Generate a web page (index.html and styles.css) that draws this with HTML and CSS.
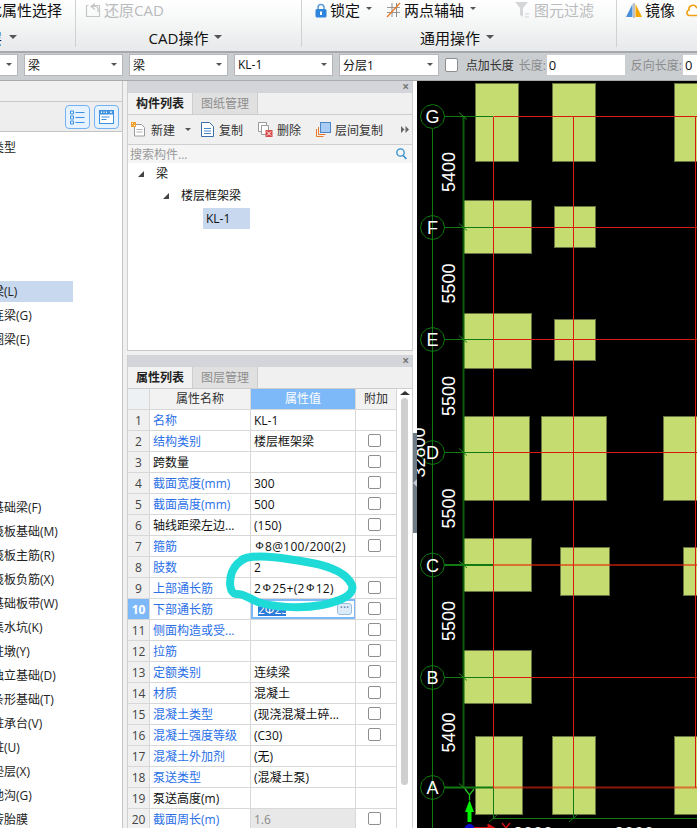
FILE: index.html
```html
<!DOCTYPE html>
<html lang="zh-CN">
<head>
<meta charset="utf-8">
<title>构件属性</title>
<link rel="stylesheet" href="styles.css">
</head>
<body>
<div class="page">
  <header class="ribbon">
    <section class="group g1">
      <div class="row1"><span class="clip-a">批属性选择</span></div>
      <div class="row2 start"><span class="clip-b">层</span><i class="caret big"></i></div>
    </section>
    <section class="group g2">
      <div class="row1">
        <span class="tool off">
          <svg class="ico" width="16" height="16" viewBox="0 0 16 16"><path d="M1.5 3.5h2M1.5 3.5v11h13v-11h-8M10 1.5l-4 3 4 3M6 4.5h5a2.5 2.5 0 0 1 2 2.5v3" fill="none" stroke="#c4c6c8" stroke-width="1.2"/></svg>还原CAD
        </span>
      </div>
      <div class="row2"><span>CAD操作</span><i class="caret big"></i></div>
    </section>
    <section class="group g3">
      <div class="row1">
        <span class="tool t-lock">
          <svg class="ico" width="12" height="15" viewBox="0 0 12 15"><path d="M3 7V4.5a3 3 0 0 1 6 0V7" fill="none" stroke="#5b9bd8" stroke-width="1.5"/><rect x="0.5" y="6" width="11" height="8.5" rx="1.5" fill="#2f84dc"/><rect x="5" y="8.5" width="2" height="3.5" fill="#fff"/></svg>锁定<i class="caret"></i>
        </span>
        <span class="tool t-axis">
          <svg class="ico" width="15" height="16" viewBox="0 0 15 16"><path d="M1 5.5h13M1 10.5h13" stroke="#9a9a9a" fill="none"/><path d="M6 1v14M10.5 1v14" stroke="#8a8a8a" fill="none"/><path d="M1 15L14 1" stroke="#e8792a" stroke-width="1.3" fill="none"/></svg>两点辅轴<i class="caret"></i>
        </span>
        <span class="tool off t-filter">
          <svg class="ico" width="16" height="16" viewBox="0 0 16 16"><path d="M0 0h13L8 6v9L5 13V6z" fill="#d4d6d8"/><path d="M10 12h4M10 15h4" stroke="#d0d2d4"/></svg>图元过滤
        </span>
      </div>
      <div class="row2"><span>通用操作</span><i class="caret big"></i></div>
    </section>
    <section class="group g4">
      <div class="row1">
        <span class="tool">
          <svg class="ico" width="16" height="15" viewBox="0 0 16 15"><path d="M6.5 1v13H0z" fill="#4a90d9"/><path d="M9.500 1v13H16z" fill="#f5a800"/><path d="M8 0v15" stroke="#888"/></svg>镜像
        </span>
        <svg class="cloud" width="16" height="14" viewBox="0 0 16 14"><path d="M3.500 12.500a2.800 2.800 0 0 1-.5-5.500 4 4 0 0 1 7.500-2.500 3.500 3.500 0 0 1 4 8z" fill="#fff" stroke="#f0a010" stroke-width="1.6"/></svg>
      </div>
    </section>
  </header>

  <div class="toolbar">
    <div class="combo c0"><i class="caret"></i></div>
    <div class="combo c1"><span>梁</span><i class="caret"></i></div>
    <div class="combo c2"><span>梁</span><i class="caret"></i></div>
    <div class="combo c2"><span>KL-1</span><i class="caret"></i></div>
    <div class="combo c3"><span>分层1</span><i class="caret"></i></div>
    <input class="check bar-check" type="checkbox" aria-label="点加长度">
    <span class="bar-label">点加长度</span>
    <span class="bar-dim l1">长度:</span>
    <div class="field f1">0</div>
    <span class="bar-dim l2">反向长度:</span>
    <div class="field f2">0</div>
  </div>

  <main class="main">
    <aside class="left">
      <div class="left-head"></div>
      <div class="left-tools">
        <button class="mode" type="button" aria-label="列表">
          <svg width="15" height="15" viewBox="0 0 15 15"><path d="M5.500 2.500h9M5.500 7.500h9M5.500 12.500h9" stroke="#3d8fe0" fill="none"/><path d="M0.500 1h3v3h-3zM0.500 6h3v3h-3zM0.500 11h3v3h-3z" stroke="#3d8fe0" fill="none"/></svg>
        </button>
        <button class="mode" type="button" aria-label="详情">
          <svg width="15" height="14" viewBox="0 0 15 14"><rect width="15" height="14" fill="#3d8fe0"/><rect x="1" y="4.500" width="13" height="8.500" fill="#fff"/><path d="M2 1.500h1v1.500H2zM4.500 1.500h1v1.500h-1zM7 1.500h1v1.500H7z" fill="#fff"/><path d="M10.500 1.500h3l-1.500 2z" fill="#fff"/><path d="M2.500 7h8M2.500 9.500h5" stroke="#3d8fe0" fill="none"/></svg>
        </button>
      </div>
      <ul class="nav">
        <li class="item">类型</li>
        <li class="item sel s5">梁(L)</li>
        <li class="item">连梁(G)</li>
        <li class="item">圈梁(E)</li>
        <li class="item s6">基础梁(F)</li>
        <li class="item">筏板基础(M)</li>
        <li class="item">筏板主筋(R)</li>
        <li class="item">筏板负筋(X)</li>
        <li class="item">基础板带(W)</li>
        <li class="item">集水坑(K)</li>
        <li class="item">柱墩(Y)</li>
        <li class="item">独立基础(D)</li>
        <li class="item">条形基础(T)</li>
        <li class="item">桩承台(V)</li>
        <li class="item">桩(U)</li>
        <li class="item">垫层(X)</li>
        <li class="item">地沟(G)</li>
        <li class="item">砖胎膜</li>
      </ul>
    </aside>

    <div class="mid">
      <section class="panel p-top">
        <div class="titlebar"><span class="x">×</span></div>
        <div class="tabs"><span class="tab on">构件列表</span><span class="tab">图纸管理</span></div>
        <div class="actions">
          <span class="act a-new">
            <svg width="15" height="15" viewBox="0 0 15 15"><path d="M3.500 2.500h7l3 3v8.500h-10z" fill="#fff" stroke="#9a9a9a"/><path d="M5.500 7.500h6M5.500 10h6" stroke="#b0b0b0"/><rect x="0" y="0" width="5" height="5" fill="#f5a030"/><path d="M1 1h1v1H1zM3 3h1v1H3z" fill="#fff"/></svg>新建<i class="caret"></i>
          </span>
          <span class="act a-copy">
            <svg width="13" height="15" viewBox="0 0 13 15"><path d="M0.500 0.500h8l4 4v10h-12z" fill="#fff" stroke="#3b6ea8"/><path d="M3 6.500h7M3 9h7M3 11.500h7" stroke="#4a86c8"/></svg>复制
          </span>
          <span class="act a-del">
            <svg width="15" height="15" viewBox="0 0 15 15"><path d="M0.500 0.500h8v9h-8z" fill="#fff" stroke="#9a9a9a"/><path d="M3.500 3.500h7v9h-7z" fill="#fff" stroke="#9a9a9a"/><rect x="7.500" y="8" width="7" height="7" fill="#d84a4a"/><path d="M9 9.500l4 4M13 9.500l-4 4" stroke="#fff"/></svg>删除
          </span>
          <span class="act a-floor">
            <svg width="15" height="15" viewBox="0 0 15 15"><path d="M0.500 7v7.500h7M2.500 5v7.500h7" fill="none" stroke="#e8792a"/><rect x="4.500" y="0.500" width="10" height="10" fill="#a9cdf5" stroke="#4a86c8"/></svg>层间复制
          </span>
          <span class="more">
            <svg width="8" height="7" viewBox="0 0 8 7"><path d="M0 0l3.500 3.500L0 7zM4.500 0L8 3.500 4.500 7z" fill="#666"/></svg>
          </span>
        </div>
        <div class="search">
          <span class="hint">搜索构件...</span>
          <svg width="11" height="12" viewBox="0 0 11 12"><circle cx="4.500" cy="4.500" r="3.700" fill="none" stroke="#2f8fd0" stroke-width="1.300"/><path d="M7.300 7.500L10.300 11" stroke="#2f8fd0" stroke-width="1.600"/></svg>
        </div>
        <div class="tree">
          <div class="node n1"><i class="tri"></i>梁</div>
          <div class="node n2"><i class="tri"></i>楼层框架梁</div>
          <div class="node n3"><span class="picked">KL-1</span></div>
        </div>
      </section>

      <section class="panel p-bottom">
        <div class="titlebar"><span class="x">×</span></div>
        <div class="tabs"><span class="tab on">属性列表</span><span class="tab">图层管理</span></div>
        <div class="props">
          <table class="grid">
            <colgroup><col class="w-n"><col class="w-a"><col class="w-b"><col class="w-c"></colgroup>
            <thead>
              <tr><th class="num"></th><th>属性名称</th><th class="cur">属性值</th><th>附加</th></tr>
            </thead>
            <tbody>
              <tr><td class="num">1</td><td class="ln">名称</td><td>KL-1</td><td></td></tr>
              <tr><td class="num">2</td><td class="ln">结构类别</td><td>楼层框架梁</td><td class="ck"><input class="check" type="checkbox" aria-label="附加"></td></tr>
              <tr><td class="num">3</td><td>跨数量</td><td></td><td class="ck"><input class="check" type="checkbox" aria-label="附加"></td></tr>
              <tr><td class="num">4</td><td class="ln">截面宽度(mm)</td><td>300</td><td class="ck"><input class="check" type="checkbox" aria-label="附加"></td></tr>
              <tr><td class="num">5</td><td class="ln">截面高度(mm)</td><td>500</td><td class="ck"><input class="check" type="checkbox" aria-label="附加"></td></tr>
              <tr><td class="num">6</td><td>轴线距梁左边...</td><td>(150)</td><td class="ck"><input class="check" type="checkbox" aria-label="附加"></td></tr>
              <tr><td class="num">7</td><td class="ln">箍筋</td><td class="rb"><b class="bar">Φ</b>8@100/200(2)</td><td class="ck"><input class="check" type="checkbox" aria-label="附加"></td></tr>
              <tr><td class="num">8</td><td class="ln">肢数</td><td>2</td><td></td></tr>
              <tr><td class="num">9</td><td class="ln">上部通长筋</td><td class="rb">2<b class="bar">Φ</b>25+(2<b class="bar">Φ</b>12)</td><td class="ck"><input class="check" type="checkbox" aria-label="附加"></td></tr>
              <tr class="active"><td class="num">10</td><td class="ln">下部通长筋</td><td class="edit"><span class="edit-box"><span class="selected">2Φ25</span><span class="dots">···</span></span></td><td class="ck"><input class="check" type="checkbox" aria-label="附加"></td></tr>
              <tr><td class="num">11</td><td class="ln">侧面构造或受...</td><td></td><td class="ck"><input class="check" type="checkbox" aria-label="附加"></td></tr>
              <tr><td class="num">12</td><td class="ln">拉筋</td><td></td><td class="ck"><input class="check" type="checkbox" aria-label="附加"></td></tr>
              <tr><td class="num">13</td><td class="ln">定额类别</td><td>连续梁</td><td class="ck"><input class="check" type="checkbox" aria-label="附加"></td></tr>
              <tr><td class="num">14</td><td class="ln">材质</td><td>混凝土</td><td class="ck"><input class="check" type="checkbox" aria-label="附加"></td></tr>
              <tr><td class="num">15</td><td class="ln">混凝土类型</td><td>(现浇混凝土碎...</td><td class="ck"><input class="check" type="checkbox" aria-label="附加"></td></tr>
              <tr><td class="num">16</td><td class="ln">混凝土强度等级</td><td>(C30)</td><td class="ck"><input class="check" type="checkbox" aria-label="附加"></td></tr>
              <tr><td class="num">17</td><td class="ln">混凝土外加剂</td><td>(无)</td><td></td></tr>
              <tr><td class="num">18</td><td class="ln">泵送类型</td><td>(混凝土泵)</td><td></td></tr>
              <tr><td class="num">19</td><td>泵送高度(m)</td><td></td><td></td></tr>
              <tr><td class="num">20</td><td class="ln">截面周长(m)</td><td class="ro">1.6</td><td class="ck"><input class="check" type="checkbox" aria-label="附加"></td></tr>
            </tbody>
          </table>
          <div class="scroll"><i class="up"></i><i class="thumb"></i></div>
          <svg class="ink" width="135" height="65" viewBox="225 550 135 65"><path d="M243 559C258 553 290 559 312 563C328 566 346 572 352 585C355 595 341 601 322 605C300 609 272 607 258 602C248 598 243 593 236 594C229 593 229 580 232 572C235 565 239 561 246 558" fill="none" stroke="#1edbd8" stroke-width="8" stroke-linecap="round" stroke-linejoin="round"/></svg>
        </div>
      </section>
    </div>

    <div class="splitter"><span class="handle"><i></i></span></div>

    <div class="canvas">
      <svg class="cad" width="280" height="747" viewBox="417 81 280 747">
        <defs>
          <polygon id="bub" points="12,0 10.400,6 6,10.400 0,12 -6,10.400 -10.400,6 -12,0 -10.400,-6 -6,-10.400 0,-12 6,-10.400 10.400,-6" fill="none" stroke="#0d7a0d"/>
          <path id="tick" d="M459 -4L467 3" stroke="#1f8a14" fill="none"/>
        </defs>
        <rect x="417" y="81" width="280" height="747" fill="#000"/>
        <g class="col">
          <rect x="475.500" y="83.500" width="43" height="78"/>
          <rect x="552.500" y="83.500" width="43" height="78"/>
          <rect x="674.500" y="83.500" width="30" height="78"/>
          <rect x="463.500" y="200.500" width="68" height="53"/>
          <rect x="554.500" y="206.500" width="41" height="41"/>
          <rect x="463.500" y="313.500" width="68" height="55"/>
          <rect x="554.500" y="319.500" width="41" height="41"/>
          <rect x="463.500" y="416.500" width="66" height="84"/>
          <rect x="541.500" y="416.500" width="65" height="84"/>
          <rect x="663.500" y="416.500" width="40" height="84"/>
          <rect x="463.500" y="538.500" width="68" height="53"/>
          <rect x="560.500" y="547.500" width="49" height="48"/>
          <rect x="683.500" y="547.500" width="20" height="48"/>
          <rect x="463.500" y="650.500" width="68" height="53"/>
          <rect x="475.500" y="736.500" width="47" height="78"/>
          <rect x="552.500" y="736.500" width="43" height="78"/>
          <rect x="674.500" y="736.500" width="30" height="78"/>
        </g>
        <g class="gl">
          <path d="M432.500 129V828"/>
          <path d="M444 116.500H493M444 227.500H493M444 339.500H493M444 452.500H493M444 677.500H493"/>
          <path d="M444 565H493M444 787.500H493" stroke-width="2"/>
          <path d="M493.500 788V818M573.500 788V818M493 818.500H697"/>
          <path d="M489 822L497 815M569 822L577 815"/>
        </g>
        <path d="M463.500 117V788" stroke="#0b5c0b" stroke-width="2" fill="none"/>
        <g class="ticks">
          <use href="#tick" y="116.500"/><use href="#tick" y="227.500"/><use href="#tick" y="339.500"/><use href="#tick" y="452.500"/><use href="#tick" y="565"/><use href="#tick" y="677.500"/><use href="#tick" y="787.500"/>
        </g>
        <g class="rl">
          <path d="M493.500 116.500H697M493.500 227.500H697M493.500 339.500H697M493.500 452.500H697M493.500 677.500H697"/>
          <path d="M493.500 117V788M573.500 117V788M695.500 117V788"/>
        </g>
        <path d="M493 565H697M493 787.500H697" stroke="rgba(235,40,10,.6)" stroke-width="2" fill="none"/>
        <g class="bubbles">
          <use href="#bub" x="432.500" y="116.500"/><use href="#bub" x="432.500" y="227.500"/><use href="#bub" x="432.500" y="339.500"/><use href="#bub" x="432.500" y="452.500"/><use href="#bub" x="432.500" y="565"/><use href="#bub" x="432.500" y="677.500"/><use href="#bub" x="432.500" y="787.500"/>
        </g>
        <g class="axis">
          <text x="432.500" y="123">G</text><text x="432.500" y="234">F</text><text x="432.500" y="346">E</text><text x="432.500" y="459">D</text><text x="432.500" y="571.500">C</text><text x="432.500" y="684">B</text><text x="432.500" y="794">A</text>
        </g>
        <g class="dim">
          <text transform="translate(454.500 172) rotate(-90)">5400</text>
          <text transform="translate(454.500 283.500) rotate(-90)">5500</text>
          <text transform="translate(454.500 396) rotate(-90)">5500</text>
          <text transform="translate(454.500 508.500) rotate(-90)">5500</text>
          <text transform="translate(454.500 621) rotate(-90)">5500</text>
          <text transform="translate(454.500 732.500) rotate(-90)">5400</text>
          <text transform="translate(425 452.500) rotate(-90)">32800</text>
          <text x="533" y="840">3000</text>
          <text x="634" y="840">3000</text>
        </g>
        <path d="M469.500 800L474 812H471.500V822H467.500V812H465z" fill="#00f000"/>
        <path d="M465 789L469.500 795L474 789M469.500 795V800" fill="none" stroke="#1fbf1f" stroke-width="1.300"/>
        <circle cx="469.500" cy="829" r="5" fill="#0a0ac8"/>
        <path d="M474 827.500H488M488 824L495 828H488z" stroke="#c81010" fill="#e01010"/>
        <path d="M502 823L506 828M510 823L506 828" stroke="#e01010" stroke-width="1.300" fill="none"/>
      </svg>
    </div>
  </main>
</div>
</body>
</html>
```
FILE: styles.css
```css
* { box-sizing: border-box; }
html, body { margin: 0; padding: 0; height: 100%; overflow: hidden; }
body {
  font-family: "Open Sans", "Noto Sans CJK SC", sans-serif;
  font-size: 12px;
  color: #111;
  background: #f0f0f0;
}
.page { width: 697px; height: 828px; overflow: hidden; display: flex; flex-direction: column; }

/* ribbon */
.ribbon {
  flex: none;
  height: 53px;
  display: flex;
  background: linear-gradient(#ffffff, #f6f7f7 40%, #e7e9ea);
  border-bottom: 2px solid #a6a8ab;
}
.group {
  height: 47px;
  display: flex;
  flex-direction: column;
  border-right: 1px solid #cfd2d4;
  font-size: 15px;
  overflow: hidden;
  flex: none;
}
.g1 { width: 76px; }
.g2 { width: 226px; }
.g3 { width: 315px; }
.g4 { width: 80px; border-right: 0; }
.row1 { flex: none; height: 20px; line-height: 20px; display: flex; align-items: center; white-space: nowrap; }
.row2 { flex: none; height: 34px; display: flex; align-items: center; justify-content: center; gap: 6px; white-space: nowrap; }
.g2 .row2 { padding-right: 6px; }
.g3 .row2 { padding-right: 4px; }
.row2.start { justify-content: flex-start; gap: 7px; }
.clip-a { flex: none; margin-left: -13px; }
.clip-b { flex: none; margin-left: -13px; }
.g2 .row1 { padding-left: 9px; }
.g3 .row1 { padding-left: 13px; }
.g4 .row1 { padding-left: 9px; gap: 11px; }
.tool { display: inline-flex; align-items: center; }
.tool.off { color: #b9bbbd; }
.ico { margin-right: 3px; flex: none; }
.t-axis { margin-left: 14px; }
.t-filter { margin-left: 39px; }
.cloud { flex: none; }
.caret {
  display: inline-block;
  width: 0;
  height: 0;
  flex: none;
  border-left: 3px solid transparent;
  border-right: 3px solid transparent;
  border-top: 3px solid #555;
}
.caret.big { border-left-width: 4px; border-right-width: 4px; border-top-width: 4px; }
.tool .caret { margin-left: 6px; margin-bottom: 3px; }

/* option bar */
.toolbar {
  flex: none;
  height: 28px;
  padding-bottom: 4px;
  display: flex;
  align-items: center;
  background: #cbced1;
  border-bottom: 1px solid #a8aaad;
  font-size: 12px;
  white-space: nowrap;
}
.combo {
  height: 22px;
  flex: none;
  margin-right: 6px;
  padding: 0 5px 0 3px;
  display: flex;
  align-items: center;
  justify-content: space-between;
  background: #fff;
  border: 1px solid #b4b6b9;
}
.c0 { width: 18px; border-left: 0; justify-content: flex-end; }
.c1 { width: 99px; }
.c2 { width: 99px; }
.c3 { width: 100px; }
.check {
  appearance: none;
  -webkit-appearance: none;
  margin: 0;
  width: 13px;
  height: 13px;
  background: #fff;
  border: 1px solid #8e8e8e;
  border-radius: 2px;
  display: block;
}
.bar-check { width: 14px; height: 14px; }
.bar-label { margin-left: 8px; color: #333; }
.bar-dim { color: #8a8c8e; }
.l1 { margin-left: 5px; margin-right: 1px; }
.l2 { margin-left: 6px; margin-right: 1px; }
.field { height: 20px; line-height: 20px; background: #fff; padding-left: 2px; flex: none; font-size: 13px; }
.f1 { width: 78px; }
.f2 { width: 14px; }

/* main */
.main { flex: 1; min-height: 0; display: flex; }
.left {
  flex: none;
  width: 123px;
  margin-right: 4px;
  background: #fff;
  border-right: 1px solid #c6c6c6;
  overflow: hidden;
  display: flex;
  flex-direction: column;
}
.left-head { flex: none; height: 21px; background: #f0f0f0; border-bottom: 1px solid #c8c8c8; }
.left-tools {
  flex: none;
  height: 30px;
  padding: 3px 3px 0 0;
  display: flex;
  justify-content: flex-end;
  gap: 4px;
  background: #eeeeee;
  border-bottom: 1px solid #c4c4c4;
}
.mode {
  width: 25px;
  height: 24px;
  padding: 0;
  display: flex;
  align-items: center;
  justify-content: center;
  background: #e6f2fd;
  border: 1px solid #72b2f2;
  border-radius: 4px;
}
.nav { list-style: none; margin: 0; padding: 5px 0 0; font-size: 12px; color: #222; }
.item { height: 21px; line-height: 21px; margin-bottom: 3px; text-indent: -8px; white-space: nowrap; }
.sel { width: 73px; background: #c7d8ef; }
.s5 { margin-top: 123px; }
.s6 { margin-top: 147px; }

/* centre panels */
.mid { flex: none; width: 286px; display: flex; flex-direction: column; }
.panel { background: #f0f0f0; border-left: 1px solid #cfcfcf; border-right: 1px solid #cfcfcf; flex: none; }
.p-top { height: 270px; display: flex; flex-direction: column; border-bottom: 1px solid #c8c8c8; }
.p-bottom { margin-top: 4px; flex: 1; min-height: 0; display: flex; flex-direction: column; }
.titlebar { flex: none; height: 12px; background: #d3d5da; text-align: right; padding-right: 3px; }
.x { display: block; font-size: 12px; line-height: 11px; color: #777; font-weight: 700; }
.tabs { flex: none; height: 22px; display: flex; background: #f0f0f0; border-bottom: 1px solid #cdcdcd; }
.tab {
  width: 65px;
  text-align: center;
  line-height: 21px;
  font-size: 12px;
  color: #8e8e8e;
  background: #e0e0e0;
  border-right: 1px solid #cdcdcd;
}
.tab.on { color: #222; background: #f2f2f2; font-weight: 600; }
.actions {
  flex: none;
  height: 30px;
  display: flex;
  align-items: center;
  padding-left: 3px;
  background: #f0f0f0;
  border-bottom: 1px solid #cfcfcf;
  color: #333;
}
.act { display: inline-flex; align-items: center; gap: 5px; white-space: nowrap; }
.act .caret { margin-left: 5px; }
.a-copy { margin-left: 10px; }
.a-del { margin-left: 15px; gap: 4px; }
.a-floor { margin-left: 15px; gap: 4px; }
.more { margin-left: auto; margin-right: 3px; display: flex; }
.search {
  flex: none;
  height: 19px;
  display: flex;
  align-items: center;
  justify-content: space-between;
  padding: 0 5px 0 2px;
  background: #f5f5f5;
  border-bottom: 1px solid #cfcfcf;
}
.hint { color: #9a9a9a; }
.tree { flex: 1; background: #fff; margin-top: -1px; }
.node { height: 22px; line-height: 22px; display: flex; align-items: center; }
.n1 { padding-left: 10px; }
.n2 { padding-left: 35px; }
.n3 { padding-left: 75px; }
.tri {
  width: 6px;
  height: 6px;
  margin-right: 12px;
  background: #444;
  clip-path: polygon(100% 0, 100% 100%, 0 100%);
}
.picked { display: block; width: 47px; height: 21px; line-height: 21px; padding-left: 3px; background: #c7d8ef; }

/* property table */
.props { flex: 1; min-height: 0; display: flex; background: #fff; position: relative; overflow: hidden; }
.grid {
  flex: none;
  width: 269px;
  table-layout: fixed;
  border-collapse: separate;
  border-spacing: 0;
  align-self: flex-start;
}
.w-n { width: 22px; }
.w-a { width: 101px; }
.w-b { width: 105px; }
.w-c { width: 41px; }
.grid th, .grid td {
  height: 21px;
  border-right: 1px solid #d8d8d8;
  border-bottom: 1px solid #d8d8d8;
  font-weight: 400;
  font-size: 12px;
  white-space: nowrap;
  overflow: hidden;
}
.grid th { padding: 0; line-height: 20px; background: #f2f2f2; text-align: center; color: #333; }
.grid td { padding: 2px 0 0 3px; line-height: 18px; }
.grid th.cur { background: #7db9f8; color: #fff; }
.grid td.num { padding: 2px 0 0; text-align: center; background: #f0f0f0; color: #444; }
.grid th.num { background: #eef1f4; }
.grid td.ln { color: #2a6fe8; }
.grid td.ck { padding: 0 0 2px 12px; }
.grid td.ro { background: #e8e8e8; color: #8a8a8a; }
.grid td.rb { letter-spacing: 0.3px; }
.active td.num { background: #7db9f8; color: #fff; font-weight: 700; }
.bar {
  display: inline-block;
  width: 11px;
  text-align: center;
  letter-spacing: 0;
  font-family: "Liberation Serif", serif;
  font-weight: 400;
  font-size: 11px;
  line-height: 11px;
  position: relative;
  top: -2px;
}
.grid td.edit { padding: 0; overflow: visible; }
.edit-box {
  display: flex;
  align-items: center;
  justify-content: space-between;
  height: 20px;
  padding: 0 2px 0 5px;
  border: 2px solid #7db9f8;
  border-right-width: 1px;
}
.selected { display: block; width: 28px; height: 13px; line-height: 13px; background: #2d7bd8; color: #fff; overflow: hidden; }
.dots {
  display: block;
  width: 15px;
  height: 12px;
  line-height: 8px;
  text-align: center;
  color: #5a7aa0;
  background: #dcebfa;
  border: 1px solid #9dbcdc;
  border-radius: 3px;
}
.scroll { flex: 1; background: #fff; display: flex; flex-direction: column; align-items: center; padding-top: 2px; }
.up {
  width: 0;
  height: 0;
  border-left: 5px solid transparent;
  border-right: 5px solid transparent;
  border-bottom: 4px solid #333;
}
.thumb { width: 7px; height: 387px; margin-top: 3px; background: #cfcfcf; border-radius: 4px; }
.ink { position: absolute; left: 97px; top: 161px; pointer-events: none; }

/* splitter */
.splitter { flex: none; width: 4px; background: #fff; padding-top: 352px; }
.handle { display: flex; align-items: center; width: 4px; height: 100px; background: #6f7b86; }
.handle i { width: 0; height: 0; border-top: 4px solid transparent; border-bottom: 4px solid transparent; border-right: 4px solid #c4c9ce; }

/* CAD view */
.canvas { flex: 1; min-width: 0; background: #000; overflow: hidden; }
.cad { display: block; }
.col rect { fill: #c4dc70; stroke: #67743f; }
.gl path { stroke: #127a12; fill: none; }
.rl path { stroke: #d81a10; fill: none; }
.axis text { fill: #fff; font-family: "Liberation Sans", sans-serif; font-size: 18px; text-anchor: middle; }
.dim text { fill: #fff; font-family: "Liberation Sans", sans-serif; font-size: 18px; text-anchor: middle; }
```
